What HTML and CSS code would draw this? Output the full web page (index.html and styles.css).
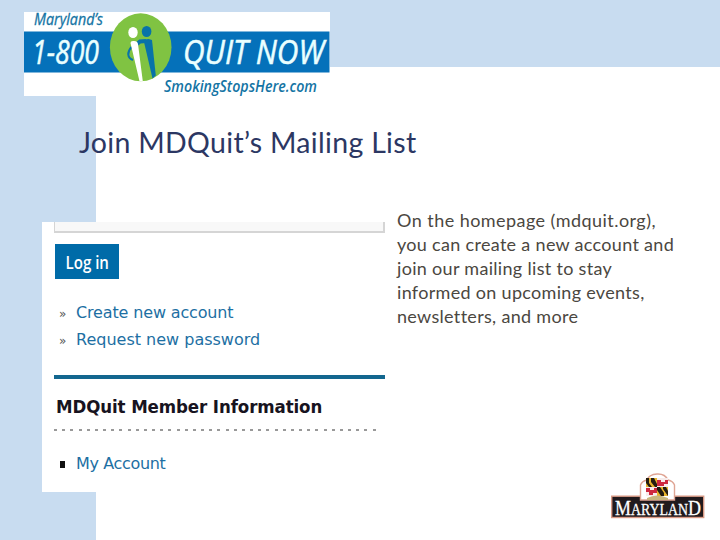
FILE: index.html
```
<!DOCTYPE html>
<html lang="en">
<head>
    <meta charset="UTF-8">
    <meta name="viewport" content="width=device-width, initial-scale=1.0">
    <title>Join MDQuit's Mailing List</title>
    <link rel="stylesheet" href="styles.css">
</head>
<body>
    <div class="slide">
        <div class="header">
            <svg class="quit-logo" viewBox="0 0 306 84" width="306" height="84">
                <rect width="306" height="84" fill="#fff"/>
                <rect y="19.500" width="305.500" height="41" fill="#0571ba"/>
                <ellipse cx="116.700" cy="35.300" rx="30.800" ry="34" fill="#80c342"/>
                <g fill="none" stroke="#0873a8" stroke-width="2">
                    <path d="M107.500 35C103 40 103 46 109 48"/>
                    <path d="M113 32l3-2.500 6-.5" stroke-width="4"/>
                </g>
                <ellipse cx="122.600" cy="19.500" rx="4.800" ry="5.500" fill="#0873a8"/>
                <path d="M120 30Q120 27 124.500 27L128 28 131.800 63.500 128.500 66.500z" fill="#0873a8"/>
                <ellipse cx="109" cy="20.500" rx="4.700" ry="5.500" fill="#fff"/>
                <path d="M106.500 31Q106.500 28.500 110 29Q113.500 29 114 32L118.800 69.300H115.500z" fill="#fff"/>
                <g class="quit-text">
                    <text x="10" y="12.500" font-size="16" textLength="69" lengthAdjust="spacingAndGlyphs" fill="#1474a4" stroke="#1474a4" stroke-width=".3">Maryland’s</text>
                    <text x="8" y="51.500" font-size="33" textLength="67" lengthAdjust="spacingAndGlyphs" fill="#eaffff" stroke="#eaffff" stroke-width=".5">1-800</text>
                    <text x="159" y="51.500" font-size="33" textLength="141" lengthAdjust="spacingAndGlyphs" fill="#eaffff" stroke="#eaffff" stroke-width=".5">QUIT NOW</text>
                    <text class="site" x="140" y="80" font-size="16.500" textLength="153" lengthAdjust="spacingAndGlyphs" fill="#1474a4">SmokingStopsHere.com</text>
                </g>
            </svg>
        </div>
        <h1>Join MDQuit’s Mailing List</h1>
        <div class="content">
            <div class="login-box">
                <div class="input-edge"></div>
                <button class="login-button"><span>Log in</span></button>
                <ul class="links">
                    <li><span class="create">Create new account</span></li>
                    <li><span>Request new password</span></li>
                </ul>
                <h2>MDQuit Member Information</h2>
                <div class="dots"></div>
                <ul class="links member">
                    <li><span class="account">My Account</span></li>
                </ul>
            </div>
            <p><span class="first-line">On the homepage (mdquit.org),</span><br>you can create a new account and<br>join our mailing list to stay<br>informed on upcoming events,<br>newsletters, and more</p>
        </div>
        <div class="footer">
            <svg class="state-logo" viewBox="0 0 94 46" width="94" height="46">
                <rect x=".7" y="23.200" width="92" height="21.300" fill="#211a1d" stroke="#d99a85" stroke-width="1.400"/>
                <path d="M29.500 27V12Q31 8 36 7Q38 1.500 46 1T57 7Q62 8 63.500 12V27z" fill="#fff" stroke="#dfa594" stroke-width="1.400"/>
                <svg x="35" y="5" width="22" height="18" viewBox="0 0 22 18">
                    <rect width="22" height="18" fill="#e9b52c"/>
                    <path d="M0 0h3v5l3 4H3L0 5zM5 0h3l3 6v3H9L5 4zM11 9h3l4 6v3h-3l-4-6zM17 9h3l2 4v5l-5-7z" fill="#251d12"/>
                    <path d="M11 0h11v9H11zM0 9h11v9H0z" fill="#f8eceb"/>
                    <path d="M11 2h4v2h4V2h3v4h-4v2h-7zM0 10h4v2h4v-2h3v5H7v2H3v-3H0z" fill="#cf2940"/>
                </svg>
                <path d="M36 25q10-5 21 0v2H36z" fill="#c9b77e"/>
                <text class="state-name" x="4" y="41.500" textLength="86" lengthAdjust="spacingAndGlyphs" fill="#fff" stroke="#fff" stroke-width=".3"><tspan font-size="22">M</tspan><tspan font-size="17">ARYLAN</tspan><tspan font-size="22">D</tspan></text>
            </svg>
        </div>
    </div>
</body>
</html>
```
FILE: styles.css
```
* {
    box-sizing: border-box;
}
body {
    margin: 0;
    font-family: Lato, sans-serif;
    background-color: #c8dcf0;
}
.slide {
    width: 720px;
    height: 540px;
    overflow: hidden;
    display: flex;
    flex-direction: column;
    background: linear-gradient(#fff, #fff) 96px 67px no-repeat;
}
.header {
    height: 96px;
    padding: 12px 0 0 24px;
}
.header svg,
.footer svg {
    display: block;
    overflow: visible;
}
.quit-text {
    font-family: "Open Sans", sans-serif;
    font-style: italic;
}
.site {
    font-weight: 600;
}
h1 {
    height: 126px;
    margin: 0;
    padding: 28px 0 0 79px;
    font-size: 28.5px;
    line-height: 36px;
    font-weight: 400;
    letter-spacing: 0.32px;
    color: #2c3763;
    white-space: nowrap;
}
.content {
    display: flex;
    height: 270px;
    padding-left: 42px;
}
.login-box {
    width: 343px;
    height: 270px;
    padding-left: 12px;
    background: #fff;
    font-family: "DejaVu Sans", sans-serif;
}
.input-edge {
    height: 11px;
    border: 1px solid #d5d5d5;
    border-width: 0 2px 2px 1px;
    background: #f8f8f8;
}
.login-button {
    display: block;
    width: 64px;
    height: 35px;
    margin: 11px 0 0 1px;
    padding: 0 0 0 1px;
    border: none;
    background: #006ba8;
    color: #fff;
    font: 600 17.5px "Open Sans", sans-serif;
}
.login-button span {
    display: inline-block;
    transform: scaleX(0.86);
}
.links {
    margin: 20px 0 0;
    padding: 0 0 0 22px;
    list-style: none;
    font-size: 16px;
    line-height: 27px;
    color: #1d6fa3;
    white-space: nowrap;
}
.create {
    letter-spacing: -0.15px;
}
.account {
    letter-spacing: -0.35px;
}
.links li::before {
    content: "»";
    display: inline-block;
    width: 17px;
    margin-left: -17px;
    font-size: 12px;
    line-height: 1;
    color: #555;
}
.member li::before {
    content: "";
    width: 5px;
    height: 7px;
    margin-left: -16px;
    margin-right: 11px;
    vertical-align: 1px;
    background: #111;
}
h2 {
    height: 54px;
    margin: 22px 0 0;
    padding: 15px 0 0 2px;
    border-top: 4px solid #13678f;
    font-family: "DejaVu Sans Condensed", "DejaVu Sans", sans-serif;
    font-stretch: condensed;
    font-size: 18.5px;
    line-height: 25px;
    font-weight: 700;
    letter-spacing: -0.1px;
    color: #171320;
    white-space: nowrap;
}
.dots {
    width: 326px;
    height: 2px;
    background: repeating-linear-gradient(90deg, #999 0 3px, #fff 3px 8.17px);
}
.member {
    margin-top: 19px;
}
p {
    margin: -14px 0 0 12px;
    font-size: 18px;
    line-height: 24px;
    letter-spacing: 0.31px;
    color: #4b4741;
    white-space: nowrap;
}
.first-line {
    letter-spacing: 0.45px;
}
.state-name {
    font-family: "Liberation Serif", serif;
}
.footer {
    margin: -19px 0 0 611px;
}
```
